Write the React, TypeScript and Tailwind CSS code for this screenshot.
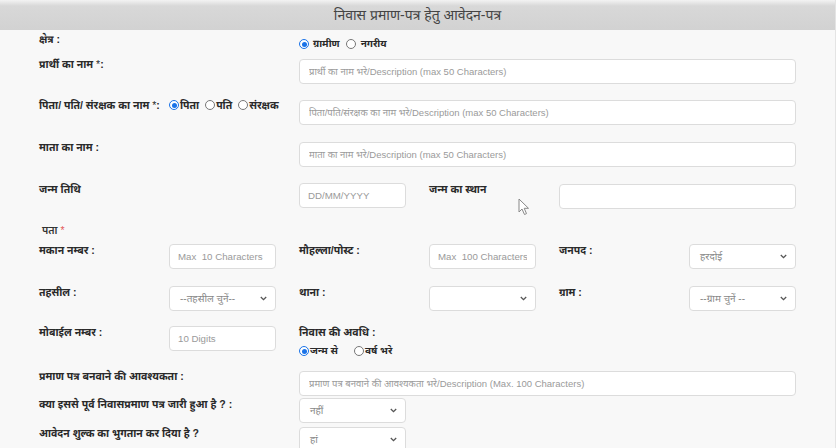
import React from "react";

const font = { fontFamily: '"Liberation Sans", "Noto Sans Devanagari", "Noto Sans", sans-serif' };

function Radio({ checked }: { checked?: boolean }) {
  return checked ? (
    <span className="inline-block w-[10px] h-[10px] rounded-full border border-[#1a73e8] bg-white p-[1.5px] align-middle shrink-0">
      <span className="block w-full h-full rounded-full bg-[#1a73e8]" />
    </span>
  ) : (
    <span className="inline-block w-[10px] h-[10px] rounded-full border border-[#777] bg-white align-middle shrink-0" />
  );
}

function Label({ children, className = "" }: { children: React.ReactNode; className?: string }) {
  return (
    <div className={"text-[10.5px] leading-[12px] font-bold text-[#2a2a2a] whitespace-nowrap " + className}>
      {children}
    </div>
  );
}

function TextInput({ placeholder, small }: { placeholder?: string; small?: boolean }) {
  return (
    <input
      placeholder={placeholder}
      className={
        "h-[25px] w-full bg-white border border-[#dcdcdc] rounded-[4px] text-[#555] placeholder:text-[#9a9a9a] outline-none " +
        (small ? "text-[9.7px] px-[8px]" : "text-[9.5px] px-[9px]")
      }
      style={font}
    />
  );
}

function Select({ value }: { value: string }) {
  return (
    <div className="relative h-[25px] w-full">
      <div className="h-full w-full bg-white border border-[#dcdcdc] rounded-[4px] pl-[10px] flex items-center text-[10px] text-[#888]">
        {value}
      </div>
      <svg
        className="absolute right-[9px] top-[10px]"
        width="7"
        height="5"
        viewBox="0 0 7 5"
        fill="none"
        stroke="#555"
        strokeWidth="1.3"
      >
        <path d="M0.8 1 L3.5 3.7 L6.2 1" />
      </svg>
    </div>
  );
}

const row = "grid grid-cols-[107px_107px_107px_107px_107px_107px] gap-x-[23px] items-start";

export default function App() {
  return (
    <div className="relative w-[839px] h-[448px] overflow-hidden bg-white" style={font}>
      <div className="w-[836px] h-full bg-[#f8f8f8] border-r border-[#e4e4e4]">
        {/* Header */}
        <div className="h-[30px] bg-gradient-to-b from-[#f3f3f3] via-[#d8d8d8] via-[20%] to-[#d2d2d2] flex items-center justify-center">
          <h1 className="text-[14px] text-[#444] font-normal leading-none">निवास प्रमाण-पत्र हेतु आवेदन-पत्र</h1>
        </div>

        <div className="pl-[39px] pt-[3px]">
          {/* क्षेत्र */}
          <div className={row + " h-[25px]"}>
            <Label className="col-span-2">क्षेत्र :</Label>
            <div className="col-span-2 mt-[5px] flex items-center text-[10px] font-bold text-[#2a2a2a] leading-[12px]">
              <Radio checked />
              <span className="ml-[4px]">ग्रामीण</span>
              <span className="ml-[6px] flex"><Radio /></span>
              <span className="ml-[5px]">नगरीय</span>
            </div>
          </div>

          {/* प्रार्थी */}
          <div className={row + " h-[41px]"}>
            <Label className="col-span-2">
              प्रार्थी का नाम <span className="font-normal">*</span>:
            </Label>
            <div className="col-span-4">
              <TextInput placeholder="प्रार्थी का नाम भरे/Description (max 50 Characters)" />
            </div>
          </div>

          {/* पिता */}
          <div className={row + " h-[42px]"}>
            <Label>
              पिता/ पति/ संरक्षक का नाम <span className="font-normal">*</span>:
            </Label>
            <div className="flex items-center text-[10.5px] font-bold text-[#2a2a2a] leading-[12px] whitespace-nowrap">
              <Radio checked />
              <span className="ml-[1px]">पिता</span>
              <span className="ml-[6px] flex"><Radio /></span>
              <span className="ml-[1px]">पति</span>
              <span className="ml-[6px] flex"><Radio /></span>
              <span className="ml-[1px]">संरक्षक</span>
            </div>
            <div className="col-span-4">
              <TextInput placeholder="पिता/पति/संरक्षक का नाम भरे/Description (max 50 Characters)" />
            </div>
          </div>

          {/* माता */}
          <div className={row + " h-[42px]"}>
            <Label className="col-span-2">माता का नाम :</Label>
            <div className="col-span-4">
              <TextInput placeholder="माता का नाम भरे/Description (max 50 Characters)" />
            </div>
          </div>

          {/* जन्म तिथि */}
          <div className={row + " h-[41px]"}>
            <Label className="col-span-2">जन्म तिथि</Label>
            <TextInput placeholder="DD/MM/YYYY" small />
            <Label>जन्म का स्थान</Label>
            <div className="col-span-2">
              <TextInput />
            </div>
          </div>

          {/* पता */}
          <div className="h-[20px] pl-[3px]">
            <div className="text-[10.5px] leading-[12px] font-semibold text-[#333]">
              पता <span className="text-[#e35b5b] font-normal">*</span>
            </div>
          </div>

          {/* मकान नम्बर */}
          <div className={row + " h-[42px]"}>
            <Label>मकान नम्बर :</Label>
            <TextInput placeholder="Max  10 Characters" small />
            <Label>मौहल्ला/पोस्ट :</Label>
            <TextInput placeholder="Max  100 Characters" small />
            <Label>जनपद :</Label>
            <Select value="हरदोई" />
          </div>

          {/* तहसील */}
          <div className={row + " h-[40px]"}>
            <Label>तहसील :</Label>
            <Select value="--तहसील चुनें--" />
            <Label>थाना :</Label>
            <Select value="" />
            <Label>ग्राम :</Label>
            <Select value="--ग्राम चुनें --" />
          </div>

          {/* मोबाईल */}
          <div className={row + " h-[44px]"}>
            <Label>मोबाईल नम्बर :</Label>
            <TextInput placeholder="10 Digits" small />
            <div className="col-span-2">
              <div className="text-[10.5px] leading-[12px] text-[#2a2a2a] font-bold">निवास की अवधि :</div>
              <div className="mt-[7px] flex items-center text-[10px] leading-[12px] font-bold text-[#2a2a2a]">
                <Radio checked />
                <span className="ml-[1px]">जन्म से</span>
                <span className="ml-[16px] flex"><Radio /></span>
                <span className="ml-[1px]">वर्ष भरे</span>
              </div>
            </div>
          </div>

          {/* प्रमाण पत्र */}
          <div className={row + " h-[28px]"}>
            <Label className="col-span-2">प्रमाण पत्र बनवाने की आवश्यकता :</Label>
            <div className="col-span-4">
              <TextInput placeholder="प्रमाण पत्र बनवाने की आवश्यकता भरे/Description (Max. 100 Characters)" />
            </div>
          </div>

          {/* क्या इससे पूर्व */}
          <div className={row + " h-[29px]"}>
            <Label className="col-span-2">क्या इससे पूर्व निवासप्रमाण पत्र जारी हुआ है ? :</Label>
            <Select value="नहीं" />
          </div>

          {/* आवेदन शुल्क */}
          <div className={row + " h-[30px]"}>
            <Label className="col-span-2">आवेदन शुल्क का भुगतान कर दिया है ?</Label>
            <Select value="हां" />
          </div>
        </div>
      </div>

      {/* mouse pointer */}
      <svg className="absolute left-[518px] top-[198px]" width="13" height="18" viewBox="0 0 13 18">
        <path
          d="M1 1 L1 14 L4 11 L6.5 16.5 L8.5 15.6 L6.2 10.3 L10.5 10.3 Z"
          fill="#fff"
          stroke="#888"
          strokeWidth="1"
          strokeLinejoin="round"
        />
      </svg>
    </div>
  );
}
